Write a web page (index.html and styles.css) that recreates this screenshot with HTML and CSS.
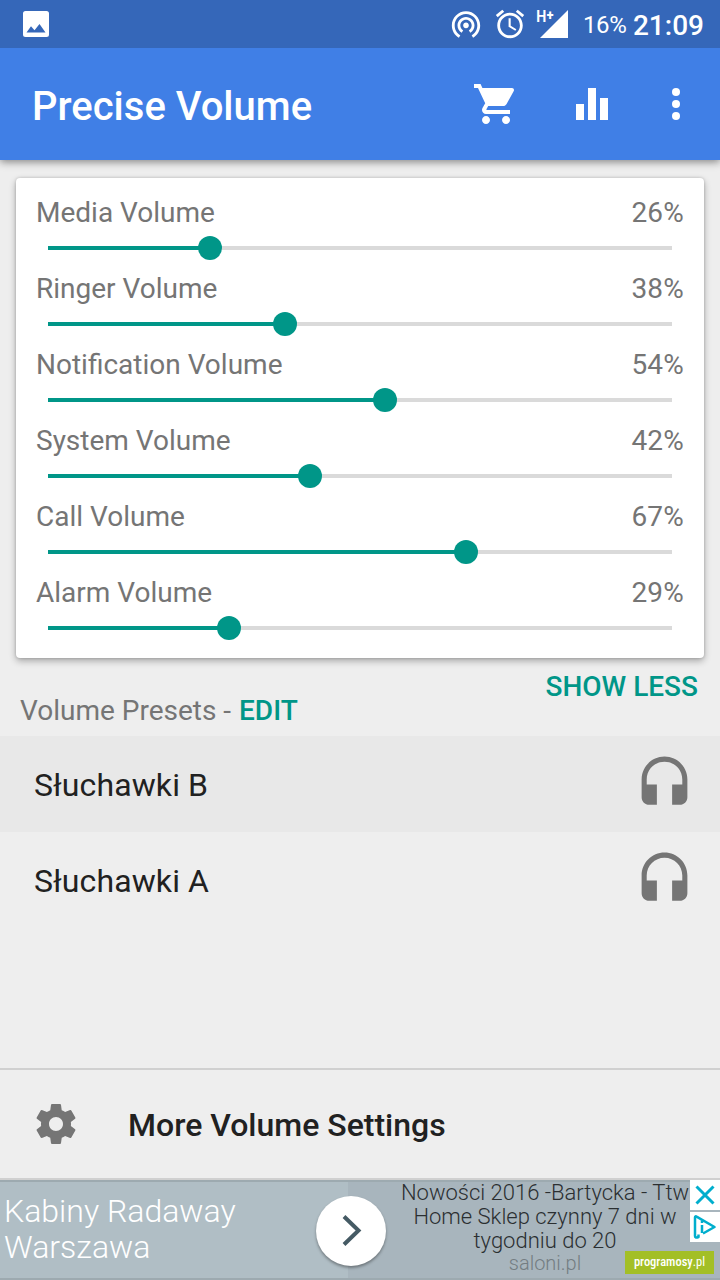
FILE: index.html
```html
<!DOCTYPE html>
<html lang="en">
<head>
  <meta charset="UTF-8">
  <title>Precise Volume</title>
  <link rel="stylesheet" href="styles.css">
</head>
<body>

  <div class="status-bar">
    <svg class="photo" viewBox="0 0 26 26"><path fill-rule="evenodd" d="M2.500 0h21A2.500 2.500 0 0 1 26 2.500v21a2.500 2.500 0 0 1-2.500 2.500h-21A2.500 2.500 0 0 1 0 23.500v-21A2.500 2.500 0 0 1 2.500 0zM3.500 21.500h19L16.500 13l-5 6.200L8 15.300z"/></svg>
    <div class="status-right">
      <svg viewBox="0 0 24 24"><path d="M12 11c-1.100 0-2 .9-2 2s.9 2 2 2 2-.9 2-2-.9-2-2-2zm6 2c0-3.310-2.690-6-6-6s-6 2.690-6 6c0 2.220 1.210 4.150 3 5.190l1-1.740c-1.190-.7-2-1.970-2-3.450 0-2.210 1.790-4 4-4s4 1.790 4 4c0 1.480-.81 2.750-2 3.450l1 1.740c1.790-1.040 3-2.970 3-5.190zM12 3C6.480 3 2 7.480 2 13c0 3.700 2.010 6.920 4.990 8.650l1-1.730C5.610 18.530 4 15.960 4 13c0-4.420 3.580-8 8-8s8 3.580 8 8c0 2.960-1.610 5.530-4 6.920l1 1.730c2.990-1.730 5-4.950 5-8.650 0-5.520-4.480-10-10-10z"/></svg>
      <svg class="alarm" viewBox="0 0 24 24"><path d="M22 5.720l-4.600-3.860-1.290 1.530 4.600 3.860L22 5.720zM7.880 3.390L6.600 1.860 2 5.710l1.290 1.530 4.590-3.850zM12.500 8H11v6l4.750 2.850.75-1.230-4-2.370V8zM12 4c-4.970 0-9 4.030-9 9s4.020 9 9 9c4.970 0 9-4.030 9-9s-4.030-9-9-9zm0 16c-3.870 0-7-3.130-7-7s3.130-7 7-7 7 3.130 7 7-3.130 7-7 7z"/></svg>
      <div class="signal">
        <svg viewBox="0 0 28 28"><path d="M28 0v28H0z"/></svg>
        <span class="network">H<sup>+</sup></span>
      </div>
      <span class="battery">16%</span>
      <span class="clock">21:09</span>
    </div>
  </div>

  <div class="app-bar">
    <h1>Precise Volume</h1>
    <svg class="cart" viewBox="0 0 24 24"><path d="M7 18c-1.100 0-1.990.9-1.990 2S5.900 22 7 22s2-.9 2-2-.9-2-2-2zM1 2v2h2l3.600 7.590-1.350 2.450c-.16.28-.25.61-.25.96 0 1.100.9 2 2 2h12v-2H7.420c-.14 0-.25-.11-.25-.25l.03-.12.900-1.630h7.450c.75 0 1.410-.41 1.750-1.030l3.580-6.490c.08-.14.12-.31.12-.48 0-.55-.45-1-1-1H5.210l-.94-2H1zm16 16c-1.100 0-1.990.9-1.990 2s.89 2 1.990 2 2-.9 2-2-.9-2-2-2z"/></svg>
    <svg class="bars" viewBox="0 0 24 24"><path d="M10 20h4V4h-4v16zm-6 0h4v-8H4v8zM16 9v11h4V9h-4z"/></svg>
    <svg class="more" viewBox="0 0 24 24"><circle cx="12" cy="6" r="2"/><circle cx="12" cy="12" r="2"/><circle cx="12" cy="18" r="2"/></svg>
  </div>

  <div class="content">
    <div class="card">
      <div class="label"><span>Media Volume</span><span>26%</span></div>
      <div class="slider"><div class="fill" style="width: 26%"></div></div>
      <div class="label"><span>Ringer Volume</span><span>38%</span></div>
      <div class="slider"><div class="fill" style="width: 38%"></div></div>
      <div class="label"><span>Notification Volume</span><span>54%</span></div>
      <div class="slider"><div class="fill" style="width: 54%"></div></div>
      <div class="label"><span>System Volume</span><span>42%</span></div>
      <div class="slider"><div class="fill" style="width: 42%"></div></div>
      <div class="label"><span>Call Volume</span><span>67%</span></div>
      <div class="slider"><div class="fill" style="width: 67%"></div></div>
      <div class="label"><span>Alarm Volume</span><span>29%</span></div>
      <div class="slider"><div class="fill" style="width: 29%"></div></div>
    </div>

    <div class="presets-header">
      <p>Volume Presets - <span class="link">EDIT</span></p>
      <span class="link show-less">SHOW LESS</span>
    </div>

    <div class="preset selected">
      <span>Słuchawki B</span>
      <svg viewBox="0 0 24 24"><path d="M12 1c-4.970 0-9 4.030-9 9v7c0 1.660 1.340 3 3 3h3v-8H5v-2c0-3.870 3.130-7 7-7s7 3.130 7 7v2h-4v8h3c1.660 0 3-1.340 3-3v-7c0-4.970-4.030-9-9-9z"/></svg>
    </div>
    <div class="preset">
      <span>Słuchawki A</span>
      <svg viewBox="0 0 24 24"><path d="M12 1c-4.970 0-9 4.030-9 9v7c0 1.660 1.340 3 3 3h3v-8H5v-2c0-3.870 3.130-7 7-7s7 3.130 7 7v2h-4v8h3c1.660 0 3-1.340 3-3v-7c0-4.970-4.030-9-9-9z"/></svg>
    </div>
  </div>

  <div class="settings">
    <svg viewBox="0 0 24 24"><path d="M19.430 12.980c.04-.32.07-.64.07-.98s-.03-.66-.07-.98l2.110-1.650c.19-.15.24-.42.12-.64l-2-3.460c-.12-.22-.39-.3-.61-.22l-2.490 1c-.52-.4-1.080-.73-1.690-.98l-.38-2.650C14.460 2.180 14.250 2 14 2h-4c-.25 0-.46.18-.49.42l-.38 2.650c-.61.25-1.170.59-1.690.98l-2.490-1c-.23-.09-.49 0-.61.22l-2 3.460c-.13.22-.07.49.12.64l2.110 1.650c-.04.32-.07.65-.07.98s.03.66.07.98l-2.110 1.650c-.19.15-.24.42-.12.64l2 3.460c.12.22.39.3.61.22l2.490-1c.52.4 1.080.73 1.690.98l.38 2.650c.03.24.24.42.49.42h4c.25 0 .46-.18.49-.42l.38-2.650c.61-.25 1.170-.59 1.690-.98l2.490 1c.23.09.49 0 .61-.22l2-3.460c.12-.22.07-.49-.12-.64l-2.110-1.650zM12 15.500c-1.930 0-3.500-1.570-3.500-3.500s1.570-3.500 3.500-3.500 3.500 1.570 3.500 3.500-1.570 3.500-3.500 3.500z"/></svg>
    <span>More Volume Settings</span>
  </div>

  <div class="ad">
    <div class="ad-title">Kabiny Radaway<br>Warszawa</div>
    <div class="ad-text">
      <p>Nowości 2016 -Bartycka - Ttw<br>Home Sklep czynny 7 dni w<br>tygodniu do 20</p>
      <p class="ad-url">saloni.pl</p>
    </div>
    <div class="ad-arrow"><svg viewBox="0 0 70 70"><path d="M28 20.500L42.500 34.500L28 48.500"/></svg></div>
    <div class="ad-buttons">
      <svg viewBox="0 0 30 30"><path d="M6.500 6.500l17 17M23.500 6.500l-17 17"/></svg>
      <svg viewBox="0 0 30 30"><path class="outline" d="M8.500 22.500v2.500Q5 26.500 5 24V5.500Q5 3.500 7 4.800L24.500 15L13 21.500"/><path class="info" d="M12 13v8M12 8.500v2.500"/></svg>
    </div>
    <div class="watermark"><b>programosy</b>.pl</div>
  </div>

</body>
</html>
```
FILE: styles.css
```css
* {
  box-sizing: border-box;
}

body {
  margin: 0;
  width: 720px;
  height: 1280px;
  display: flex;
  flex-direction: column;
  background: #eeeeee;
  font-family: Roboto, sans-serif;
  overflow: hidden;
}

h1, p {
  margin: 0;
}

svg {
  display: block;
  flex-shrink: 0;
  fill: currentColor;
}

.status-bar {
  position: relative;
  z-index: 1;
  height: 48px;
  padding: 0 16px 0 23px;
  background: #3567b9;
  color: white;
  display: flex;
  align-items: center;
  justify-content: space-between;
}

.photo {
  width: 26px;
  height: 26px;
}

.status-right {
  display: flex;
  align-items: center;
  white-space: nowrap;
}

.status-right > svg {
  width: 34px;
  height: 34px;
}

.status-right .alarm {
  margin-left: 10px;
}

.signal {
  position: relative;
  margin-left: 13px;
}

.signal svg {
  width: 28px;
  height: 28px;
}

.network {
  position: absolute;
  left: -4px;
  top: -2px;
  font-family: "Roboto Condensed", Roboto, sans-serif;
  font-size: 17px;
  line-height: 17px;
  font-weight: 500;
}

.network sup {
  position: relative;
  top: -2px;
  font-size: 15px;
  line-height: 0;
  font-weight: 700;
  vertical-align: baseline;
}

.battery {
  margin-left: 15px;
  padding-top: 2px;
  width: 50px;
  font-size: 24px;
  letter-spacing: -0.4px;
}

.clock {
  padding-top: 2px;
  font-size: 28px;
  font-weight: 500;
}

.app-bar {
  position: relative;
  height: 112px;
  padding: 0 20px 0 32px;
  background: #407fe6;
  color: white;
  display: flex;
  align-items: center;
  box-shadow: 0 2px 8px rgba(0, 0, 0, 0.45);
}

.app-bar h1 {
  flex: 1;
  padding-top: 4px;
  font-size: 40px;
  font-weight: 500;
}

.app-bar svg {
  width: 48px;
  height: 48px;
}

.app-bar .bars {
  margin-left: 48px;
}

.app-bar .more {
  margin-left: 36px;
}

.content {
  flex: 1;
  padding-top: 18px;
}

.card {
  height: 480px;
  margin: 0 16px;
  padding: 15px 20px 0;
  background: white;
  border-radius: 4px;
  box-shadow: 0 3px 7px rgba(0, 0, 0, 0.3), 0 0 3px rgba(0, 0, 0, 0.18);
}

.label {
  display: flex;
  justify-content: space-between;
  font-size: 28px;
  line-height: 40px;
  color: #757575;
}

.label span:last-child {
  letter-spacing: 0.2px;
}

.slider {
  height: 4px;
  margin: 13px 12px 19px;
  background: #dadada;
}

.fill {
  position: relative;
  height: 4px;
  background: #009688;
}

.fill::after {
  content: "";
  position: absolute;
  right: -12px;
  top: -10px;
  width: 24px;
  height: 24px;
  border-radius: 50%;
  background: #009688;
}

.presets-header {
  height: 78px;
  padding: 9px 22px 0 20px;
  display: flex;
  justify-content: space-between;
  font-size: 28px;
  line-height: 40px;
  color: #757575;
}

.presets-header p {
  padding-top: 24px;
}

.link {
  color: #009688;
  font-weight: 500;
}

.presets-header p .link {
  margin-left: 1px;
}

.preset {
  height: 96px;
  padding: 0 25px 0 34px;
  display: flex;
  align-items: center;
  justify-content: space-between;
  font-size: 32px;
  color: #212121;
}

.preset span {
  padding-top: 2px;
  letter-spacing: 0.1px;
}

.preset.selected {
  background: #e8e8e8;
}

.preset svg {
  width: 61px;
  height: 61px;
  color: #757575;
}

.settings {
  height: 112px;
  padding-left: 32px;
  border-top: 2px solid #d0d0d0;
  border-bottom: 2px solid #d0d0d0;
  display: flex;
  align-items: center;
  gap: 48px;
  font-size: 32px;
  font-weight: 500;
  color: #212121;
}

.settings span {
  padding-top: 2px;
}

.settings svg {
  width: 48px;
  height: 48px;
  color: #757575;
}

.ad {
  position: relative;
  height: 100px;
  background: #a8b5bd;
  border-top: 2px solid #9daab0;
  border-bottom: 2px solid #9daab0;
  display: flex;
  font-weight: 300;
}

.ad-title {
  width: 348px;
  padding: 11px 0 0 4px;
  background: #b0bec5;
  color: white;
  font-size: 32px;
  line-height: 36px;
}

.ad-text {
  width: 294px;
  margin: -1px 0 0 50px;
  text-align: center;
  white-space: nowrap;
  font-size: 22px;
  line-height: 24px;
  color: #2b2f31;
}

.ad-text .ad-url {
  line-height: 20px;
  font-size: 20px;
  color: #747d82;
}

.ad-arrow {
  position: absolute;
  left: 316px;
  top: 14px;
  width: 70px;
  height: 70px;
  border-radius: 50%;
  background: white;
  box-shadow: 0 2px 3px rgba(0, 0, 0, 0.35);
}

.ad-arrow svg {
  fill: none;
  stroke: #455a64;
  stroke-width: 4;
}

.ad-buttons {
  position: absolute;
  right: 0;
  top: -2px;
  display: grid;
  gap: 2px;
}

.ad-buttons svg {
  width: 30px;
  height: 30px;
  background: white;
  fill: none;
  stroke: #00aecd;
  stroke-width: 3;
}

.ad-buttons .outline {
  stroke-width: 2.5;
  stroke-linejoin: round;
}

.ad-buttons .info {
  stroke-width: 2.5;
}

.watermark {
  position: absolute;
  right: 6px;
  bottom: 4px;
  width: 89px;
  height: 23px;
  background: #a3bf26;
  color: white;
  font-family: "Roboto Condensed", Roboto, sans-serif;
  font-size: 12.5px;
  line-height: 22px;
  font-weight: 400;
  text-align: center;
}

.watermark b {
  font-weight: 500;
}
```
